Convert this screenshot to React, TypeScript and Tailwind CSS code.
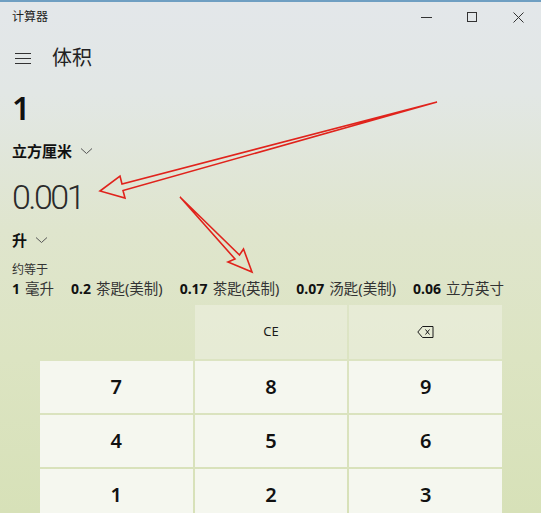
const results = [
  { n: "1", u: "毫升" },
  { n: "0.2", u: "茶匙(美制)" },
  { n: "0.17", u: "茶匙(英制)" },
  { n: "0.07", u: "汤匙(美制)" },
  { n: "0.06", u: "立方英寸" },
]

const digits = ["7", "8", "9", "4", "5", "6", "1", "2", "3"]

function Chevron() {
  return (
    <svg width="13" height="8" viewBox="0 0 13 8" className="ml-[8px]">
      <path d="M1 1.5 L6.5 6.5 L12 1.5" fill="none" stroke="#555" strokeWidth="1" />
    </svg>
  )
}

function BackspaceIcon() {
  return (
    <svg width="17" height="12" viewBox="0 0 17 12">
      <path d="M5.5 0.5 H16 V11.5 H5.5 L0.8 6 Z" fill="none" stroke="#1a1a1a" strokeWidth="1" />
      <path d="M8.5 3.5 L12.5 8.5 M12.5 3.5 L8.5 8.5" stroke="#1a1a1a" strokeWidth="1" />
    </svg>
  )
}

export default function App() {
  return (
    <div className="relative w-[541px] h-[513px] overflow-hidden bg-[linear-gradient(180deg,#e3e7ea_0%,#e2e7e5_18%,#dfe5cd_45%,#dce4c2_70%,#d7e1b8_100%)] text-[#1f1f1f] font-['Noto_Sans','Noto_Sans_CJK_SC',sans-serif]">
      {/* title bar */}
      <div className="h-[2px] bg-[#6f9fc2]" />
      <div className="flex h-[30px] items-center">
        <span className="pl-[12px] text-[12px] text-[#222]">计算器</span>
        <div className="ml-auto flex h-full items-center">
          <div className="flex w-[46px] justify-center">
            <div className="h-px w-[11px] bg-[#333]" />
          </div>
          <div className="flex w-[46px] justify-center">
            <div className="h-[10px] w-[10px] border border-[#333]" />
          </div>
          <div className="flex w-[46px] justify-center">
            <svg width="11" height="11" viewBox="0 0 11 11">
              <path d="M0.5 0.5 L10.5 10.5 M10.5 0.5 L0.5 10.5" stroke="#333" strokeWidth="1" />
            </svg>
          </div>
        </div>
      </div>

      {/* header */}
      <div className="flex h-[52px] items-center">
        <div className="ml-[15px] flex w-[16px] flex-col gap-[4px]">
          <div className="h-px bg-[#333]" />
          <div className="h-px bg-[#333]" />
          <div className="h-px bg-[#333]" />
        </div>
        <span className="ml-[21px] text-[20px] leading-none text-[#222]">体积</span>
      </div>

      {/* converter */}
      <div className="pl-[12px]">
        <div className="mt-[8px] h-[32px] text-[32px] font-semibold leading-none text-[#111]">1</div>
        <div className="mt-[17px] flex h-[20px] items-center text-[15px] font-bold text-[#111]">
          立方厘米
          <Chevron />
        </div>
        <div className="mt-[19px] h-[34px] font-['Roboto','Noto_Sans',sans-serif] text-[34px] font-light leading-none tracking-[-2.5px] text-[#2a2a2a]">
          0.001
        </div>
        <div className="mt-[16px] flex h-[20px] items-center text-[15px] font-bold text-[#111]">
          升
          <Chevron />
        </div>
        <div className="mt-[12px] h-[16px] text-[12px] leading-[16px] text-[#333]">约等于</div>
        <div className="mt-px flex h-[18px] items-center gap-[17px] text-[14.5px] leading-[18px]">
          {results.map((r) => (
            <span key={r.u + r.n} className="whitespace-nowrap">
              <span className="text-[14px] font-bold text-[#111]">{r.n}</span>
              <span className="ml-[5px] text-[#333]">{r.u}</span>
            </span>
          ))}
        </div>
      </div>

      {/* keypad */}
      <div className="ml-[40px] mt-[8px] grid w-[462px] grid-cols-3 gap-[2px]">
        <div className="h-[54px]" />
        <div className="flex h-[54px] items-center justify-center bg-[#e9eedb]/75 text-[13px] text-[#1a1a1a]">CE</div>
        <div className="flex h-[54px] items-center justify-center bg-[#e9eedb]/75">
          <BackspaceIcon />
        </div>
        {digits.map((d) => (
          <div
            key={d}
            className="flex h-[52px] items-center justify-center bg-[#f5f7ef] text-[20px] font-semibold text-[#111]"
          >
            {d}
          </div>
        ))}
      </div>

      {/* annotation arrows */}
      <svg className="pointer-events-none absolute left-0 top-0" width="541" height="513" viewBox="0 0 541 513">
        <path
          d="M437 102 L122 184 L120 176 L100 191 L125 198 L123 190.5 Z"
          fill="none"
          stroke="#e0231c"
          strokeWidth="1.6"
          strokeLinejoin="miter"
        />
        <path
          d="M180 197 L239.5 255 L243.5 249 L252 272 L228 262 L235 259 Z"
          fill="none"
          stroke="#e0231c"
          strokeWidth="1.6"
        />
      </svg>
    </div>
  )
}
